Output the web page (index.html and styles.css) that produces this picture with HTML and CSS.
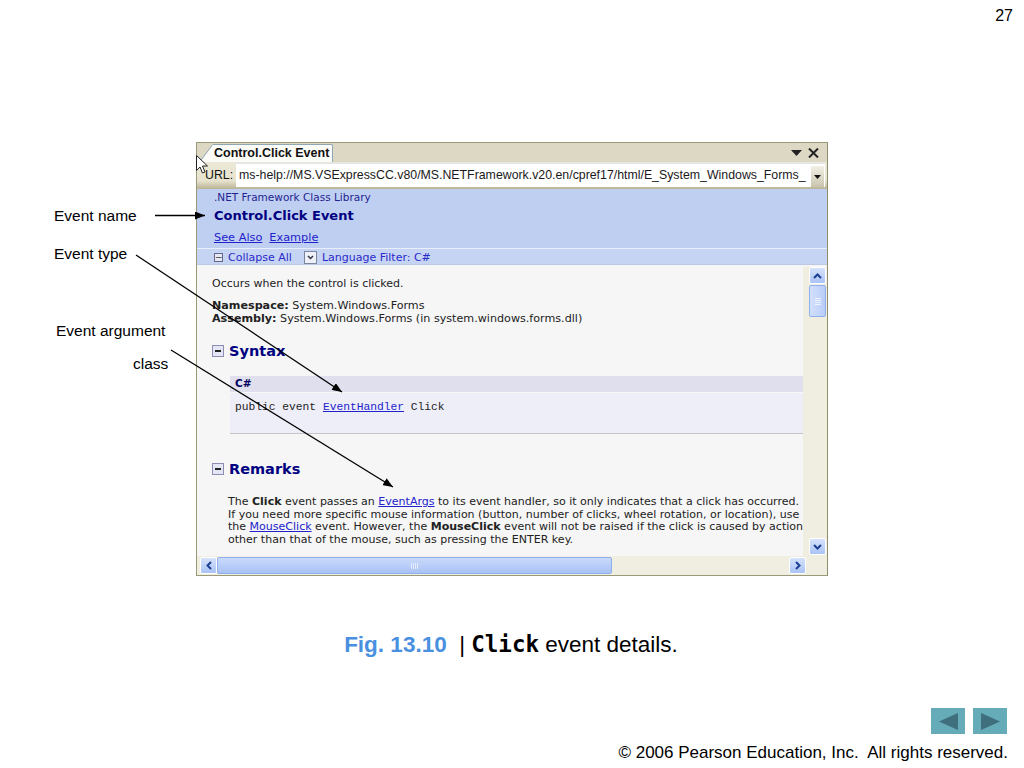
FILE: index.html
```html
<!DOCTYPE html>
<html lang="en">
<head>
  <meta charset="UTF-8">
  <title>Click event details</title>
  <link rel="stylesheet" href="styles.css">
</head>
<body>
  <div class="slide">
    <div class="page-num">27</div>

    <div class="window">
      <div class="tab-strip">
        <div class="tab-group">
          <svg class="tab-slant" width="13" height="19" viewBox="0 0 13 19"><path d="M0 19L12 2.500 13 1.500V19z" fill="#fbfbf8"/><path d="M0 18.500L12 2.500 13 1.500" fill="none" stroke="#8fa6b4"/></svg>
          <div class="tab">Control.Click Event</div>
        </div>
        <div class="tab-tools">
          <svg width="11" height="6" viewBox="0 0 11 6"><path d="M0 0h11L5.500 6z" fill="#222"/></svg>
          <svg width="11" height="10" viewBox="0 0 11 10"><path d="M1 0.500l9 9M10 0.500l-9 9" stroke="#222" stroke-width="2"/></svg>
        </div>
      </div>
      <div class="url-row">
        <span class="url-label">URL:</span>
        <div class="url-box">
          <span class="url-text">ms-help://MS.VSExpressCC.v80/MS.NETFramework.v20.en/cpref17/html/E_System_Windows_Forms_</span>
          <span class="url-drop"><svg width="7" height="4" viewBox="0 0 7 4"><path d="M0 0h7L3.500 4z" fill="#111"/></svg></span>
        </div>
      </div>

      <div class="doc-head">
        <div class="lib">.NET Framework Class Library</div>
        <div class="doc-title">Control.Click Event</div>
        <div class="doc-links"><a>See Also</a><a>Example</a></div>
      </div>
      <div class="filter-bar">
        <span class="mini-box">&minus;</span>
        <span>Collapse All</span>
        <span class="filter-drop"><svg width="7" height="5" viewBox="0 0 7 5"><path d="M1 1l2.500 2.500L6 1" fill="none" stroke="#334" stroke-width="1.500"/></svg></span>
        <span>Language Filter: C#</span>
      </div>

      <div class="doc-area">
        <div class="doc-body">
          <p class="summary">Occurs when the control is clicked.</p>
          <p class="meta"><b>Namespace:</b> System.Windows.Forms<br><b>Assembly:</b> System.Windows.Forms (in system.windows.forms.dll)</p>
          <h2 class="section"><span class="sec-box"></span>Syntax</h2>
          <div class="code">
            <div class="code-head">C#</div>
            <pre class="code-body">public event <a>EventHandler</a> Click</pre>
          </div>
          <h2 class="section remarks"><span class="sec-box"></span>Remarks</h2>
          <p class="remark-text">The <b>Click</b> event passes an <a>EventArgs</a> to its event handler, so it only indicates that a click has occurred.<br>If you need more specific mouse information (button, number of clicks, wheel rotation, or location), use<br>the <a>MouseClick</a> event. However, the <b>MouseClick</b> event will not be raised if the click is caused by action<br>other than that of the mouse, such as pressing the ENTER key.</p>
        </div>
        <div class="vscroll">
          <span class="sb-btn"><svg width="9" height="6" viewBox="0 0 9 6"><path d="M1 5l3.500-3.500L8 5" fill="none" stroke="#1c3f94" stroke-width="2"/></svg></span>
          <span class="v-thumb"><i></i><i></i><i></i><i></i></span>
          <span class="sb-btn v-end"><svg width="9" height="6" viewBox="0 0 9 6"><path d="M1 1l3.500 3.500L8 1" fill="none" stroke="#1c3f94" stroke-width="2"/></svg></span>
        </div>
      </div>
      <div class="hscroll">
        <span class="sb-btn"><svg width="6" height="9" viewBox="0 0 6 9"><path d="M5 1L1.500 4.500 5 8" fill="none" stroke="#1c3f94" stroke-width="2"/></svg></span>
        <span class="h-thumb"><i></i><i></i><i></i><i></i></span>
        <span class="sb-btn h-end"><svg width="6" height="9" viewBox="0 0 6 9"><path d="M1 1l3.500 3.500L1 8" fill="none" stroke="#1c3f94" stroke-width="2"/></svg></span>
      </div>
    </div>

    <!-- callouts lie over the window -->
    <span class="callout c-name">Event name</span>
    <span class="callout c-type">Event type</span>
    <span class="callout c-arg">Event argument</span>
    <span class="callout c-class">class</span>
    <svg class="arrows" width="1024" height="768" viewBox="0 0 1024 768">
      <defs>
        <marker id="head" markerUnits="userSpaceOnUse" markerWidth="10" markerHeight="8" refX="10" refY="4" orient="auto">
          <path d="M0 0L10 4L0 8z" fill="#000"/>
        </marker>
      </defs>
      <line x1="155" y1="215.500" x2="205" y2="215.500" stroke="#000" stroke-width="1.300" marker-end="url(#head)"/>
      <line x1="136" y1="255" x2="342" y2="392" stroke="#000" stroke-width="1.300" marker-end="url(#head)"/>
      <line x1="171" y1="350" x2="393" y2="487" stroke="#000" stroke-width="1.300" marker-end="url(#head)"/>
      <path d="M196.500 155.500v15l3.500-3.500 2.500 6 2.500-1-2.500-6h5z" fill="#fff" stroke="#222" stroke-width="1"/>
    </svg>

    <div class="caption"><b>Fig. 13.10</b>&nbsp; | <code>Click</code> event details.</div>

    <div class="nav">
      <span class="nav-btn"><svg width="19" height="17" viewBox="0 0 19 17"><path d="M0 8.500L19 0v17z" fill="#3f6f7d"/></svg></span>
      <span class="nav-btn"><svg width="19" height="17" viewBox="0 0 19 17"><path d="M19 8.500L0 0v17z" fill="#3f6f7d"/></svg></span>
    </div>
    <div class="copyright">&copy; 2006 Pearson Education, Inc.&nbsp; All rights reserved.</div>
  </div>
</body>
</html>
```
FILE: styles.css
```css
body {
  margin: 0;
  background-color: #fff;
  font-family: "Liberation Sans", Arial, sans-serif;
  color: #000;
}

.slide {
  position: relative;
  width: 1024px;
  height: 768px;
  overflow: hidden;
}

.page-num {
  padding: 6px 11px 0 0;
  height: 136px;
  box-sizing: border-box;
  text-align: right;
  font-size: 16px;
  line-height: 20px;
}

/* help window */
.window {
  margin: 6px 0 0 196px;
  width: 632px;
  height: 434px;
  box-sizing: border-box;
  border: 1px solid #9a9a78;
  border-right-color: #8f8f6c;
  background-color: #ece9d8;
  font-family: "DejaVu Sans", Verdana, sans-serif;
  font-size: 11px;
  display: flex;
  flex-direction: column;
}

.tab-strip {
  height: 19px;
  flex: none;
  display: flex;
  justify-content: space-between;
  background-color: #dcd8c4;
  padding-left: 3px;
}

.tab-group {
  display: flex;
}

.tab-slant {
  flex: none;
}

.tab {
  height: 19px;
  box-sizing: border-box;
  margin-top: 1px;
  padding: 1px 3px 0 1px;
  background-color: #fbfbf8;
  border: 1px solid #8fa6b4;
  border-left: none;
  border-bottom: none;
  border-radius: 0 2px 0 0;
  font-family: "Liberation Sans", Arial, sans-serif;
  font-size: 12.500px;
  font-weight: bold;
  line-height: 15px;
  color: #111;
}

.tab-tools {
  display: flex;
  align-items: center;
  gap: 6px;
  padding: 1px 8px 0 0;
}

.url-row {
  height: 27px;
  flex: none;
  box-sizing: border-box;
  display: flex;
  align-items: flex-start;
  padding-top: 1px;
  background: linear-gradient(#ece9d8, #e6e2cd 70%, #b9b393);
  font-family: "Liberation Sans", Arial, sans-serif;
  font-size: 12.330px;
}

.url-label {
  width: 39px;
  flex: none;
  padding: 5px 0 0 8px;
  box-sizing: border-box;
  line-height: 15px;
  color: #111;
}

.url-box {
  flex: 1;
  height: 23px;
  margin-right: 2px;
  display: flex;
  justify-content: space-between;
  background-color: #fff;
  border-top: 1px solid #dfe5ea;
}

.url-text {
  padding: 4px 0 0 3px;
  line-height: 15px;
  white-space: nowrap;
  color: #1a1a1a;
}

.url-drop {
  width: 13px;
  margin: 2px 1px 0 0;
  display: flex;
  align-items: center;
  justify-content: center;
  background: linear-gradient(#f2f0e6, #c9c5ad);
}

.doc-head {
  height: 59px;
  flex: none;
  box-sizing: border-box;
  padding: 2px 0 0 17px;
  background-color: #bfcff2;
}

.lib {
  font-size: 10.500px;
  line-height: 13px;
  color: #23238f;
}

.doc-title {
  margin-top: 3px;
  font-size: 13px;
  font-weight: bold;
  line-height: 17px;
  color: #000080;
}

.doc-links {
  margin-top: 6px;
  display: flex;
  gap: 7px;
  font-size: 11.300px;
  line-height: 15px;
}

.doc-links a {
  color: #2222cc;
  text-decoration: underline;
}

.filter-bar {
  height: 17px;
  flex: none;
  box-sizing: border-box;
  display: flex;
  align-items: center;
  padding: 1px 0 0 17px;
  background-color: #c6d4f4;
  border-top: 1px solid #e8eefc;
  border-bottom: 1px solid #bcc9e4;
  color: #2a2ac8;
}

.mini-box {
  width: 9px;
  height: 9px;
  box-sizing: border-box;
  margin-right: 5px;
  border: 1px solid #66668c;
  background-color: #e6e8f4;
  color: #333;
  font-size: 9px;
  line-height: 6px;
  text-align: center;
}

.filter-drop {
  width: 13px;
  height: 13px;
  box-sizing: border-box;
  margin: 0 5px 0 12px;
  display: flex;
  align-items: center;
  justify-content: center;
  border: 1px solid #7a869c;
  background-color: #eef1f8;
}

.doc-area {
  flex: 1;
  min-height: 0;
  display: flex;
  background-color: #f6f6f6;
}

.doc-body {
  width: 606px;
  flex: none;
  padding: 12px 0 0 15px;
  box-sizing: border-box;
  color: #222;
  line-height: 13px;
}

.doc-body p {
  margin: 0;
}

.doc-body a {
  color: #2222cc;
  text-decoration: underline;
}

.meta {
  padding-top: 9px;
  font-size: 11.150px;
}

.section {
  display: flex;
  align-items: center;
  margin: 16px 0 0 0;
  font-size: 14.500px;
  font-weight: bold;
  line-height: 20px;
  color: #000080;
}

.sec-box {
  position: relative;
  width: 12px;
  height: 12px;
  box-sizing: border-box;
  margin-right: 5px;
  border: 1px solid #8c8cb4;
  background-color: #e4e6f6;
}

.sec-box::after {
  content: "";
  position: absolute;
  left: 2px;
  top: 4px;
  width: 6px;
  height: 2px;
  background-color: #222;
}

.code {
  margin: 15px 0 0 18px;
}

.code-head {
  height: 16px;
  padding-left: 5px;
  box-sizing: border-box;
  background-color: #dfdfee;
  font-weight: bold;
  font-size: 10.500px;
  line-height: 15px;
  color: #000060;
}

.code-body {
  margin: 1px 0 0 0;
  height: 41px;
  box-sizing: border-box;
  padding: 8px 0 0 5px;
  background-color: #eeeef8;
  border-bottom: 1px solid #c4c4cc;
  font-family: "Liberation Mono", "Courier New", monospace;
  font-size: 11.270px;
  line-height: 13px;
  color: #222;
}

.remarks {
  margin-top: 25px;
}

.remark-text {
  margin: 17px 0 0 16px !important;
  font-size: 11.030px;
  line-height: 12.600px;
  white-space: nowrap;
}

/* scrollbars */
.sb-btn {
  display: flex;
  align-items: center;
  justify-content: center;
  flex: none;
  box-sizing: border-box;
  width: 17px;
  height: 17px;
  border: 1px solid #fff;
  border-radius: 2px;
  background: linear-gradient(#d6e2fb, #aac3f5);
}

.vscroll {
  width: 24px;
  margin-top: 2px;
  padding-left: 6px;
  box-sizing: border-box;
  display: flex;
  flex-direction: column;
  background-color: #f0eee0;
}

.v-thumb {
  height: 32px;
  width: 17px;
  flex: none;
  box-sizing: border-box;
  margin-top: 1px;
  display: flex;
  flex-direction: column;
  align-items: center;
  justify-content: center;
  gap: 1px;
  border: 1px solid #8fb0ee;
  border-radius: 2px;
  background: linear-gradient(90deg, #d3e0fb, #b8cdf8);
}

.v-thumb i {
  width: 6px;
  height: 1px;
  background-color: #eef3fe;
}

.v-end {
  margin-top: auto;
  margin-bottom: 1px;
}

.hscroll {
  height: 19px;
  flex: none;
  box-sizing: border-box;
  display: flex;
  padding: 1px 0 0 3px;
  background-color: #f0eee0;
}

.h-thumb {
  width: 395px;
  height: 17px;
  flex: none;
  box-sizing: border-box;
  display: flex;
  align-items: center;
  justify-content: center;
  gap: 1px;
  border: 1px solid #8fb0ee;
  border-radius: 2px;
  background: linear-gradient(#c9d9fa, #a9c2f6);
}

.h-thumb i {
  width: 1px;
  height: 6px;
  background-color: #e4ecfd;
}

.h-end {
  margin-left: 177px;
}

/* callouts */
.callout {
  position: absolute;
  font-size: 15.500px;
  line-height: 16px;
  white-space: nowrap;
}

.c-name { left: 54px; top: 208px; }
.c-type { left: 54px; top: 246px; }
.c-arg { left: 56px; top: 323px; }
.c-class { left: 133px; top: 356px; }

.arrows {
  position: absolute;
  left: 0;
  top: 0;
}

.caption {
  margin-top: 55px;
  padding-right: 2px;
  text-align: center;
  font-size: 22.500px;
  line-height: 26px;
}

.caption b {
  color: #4a90e0;
}

.caption code {
  font-family: "DejaVu Sans Mono", "Liberation Mono", monospace;
  font-weight: bold;
  font-size: 22.500px;
}

.nav {
  margin: 50px 17px 0 0;
  display: flex;
  justify-content: flex-end;
  gap: 8px;
}

.nav-btn {
  width: 34px;
  height: 26px;
  display: flex;
  align-items: center;
  justify-content: center;
  background-color: #65abb8;
}

.copyright {
  margin-top: 9px;
  padding-right: 16px;
  text-align: right;
  font-size: 17px;
  line-height: 20px;
}
```
